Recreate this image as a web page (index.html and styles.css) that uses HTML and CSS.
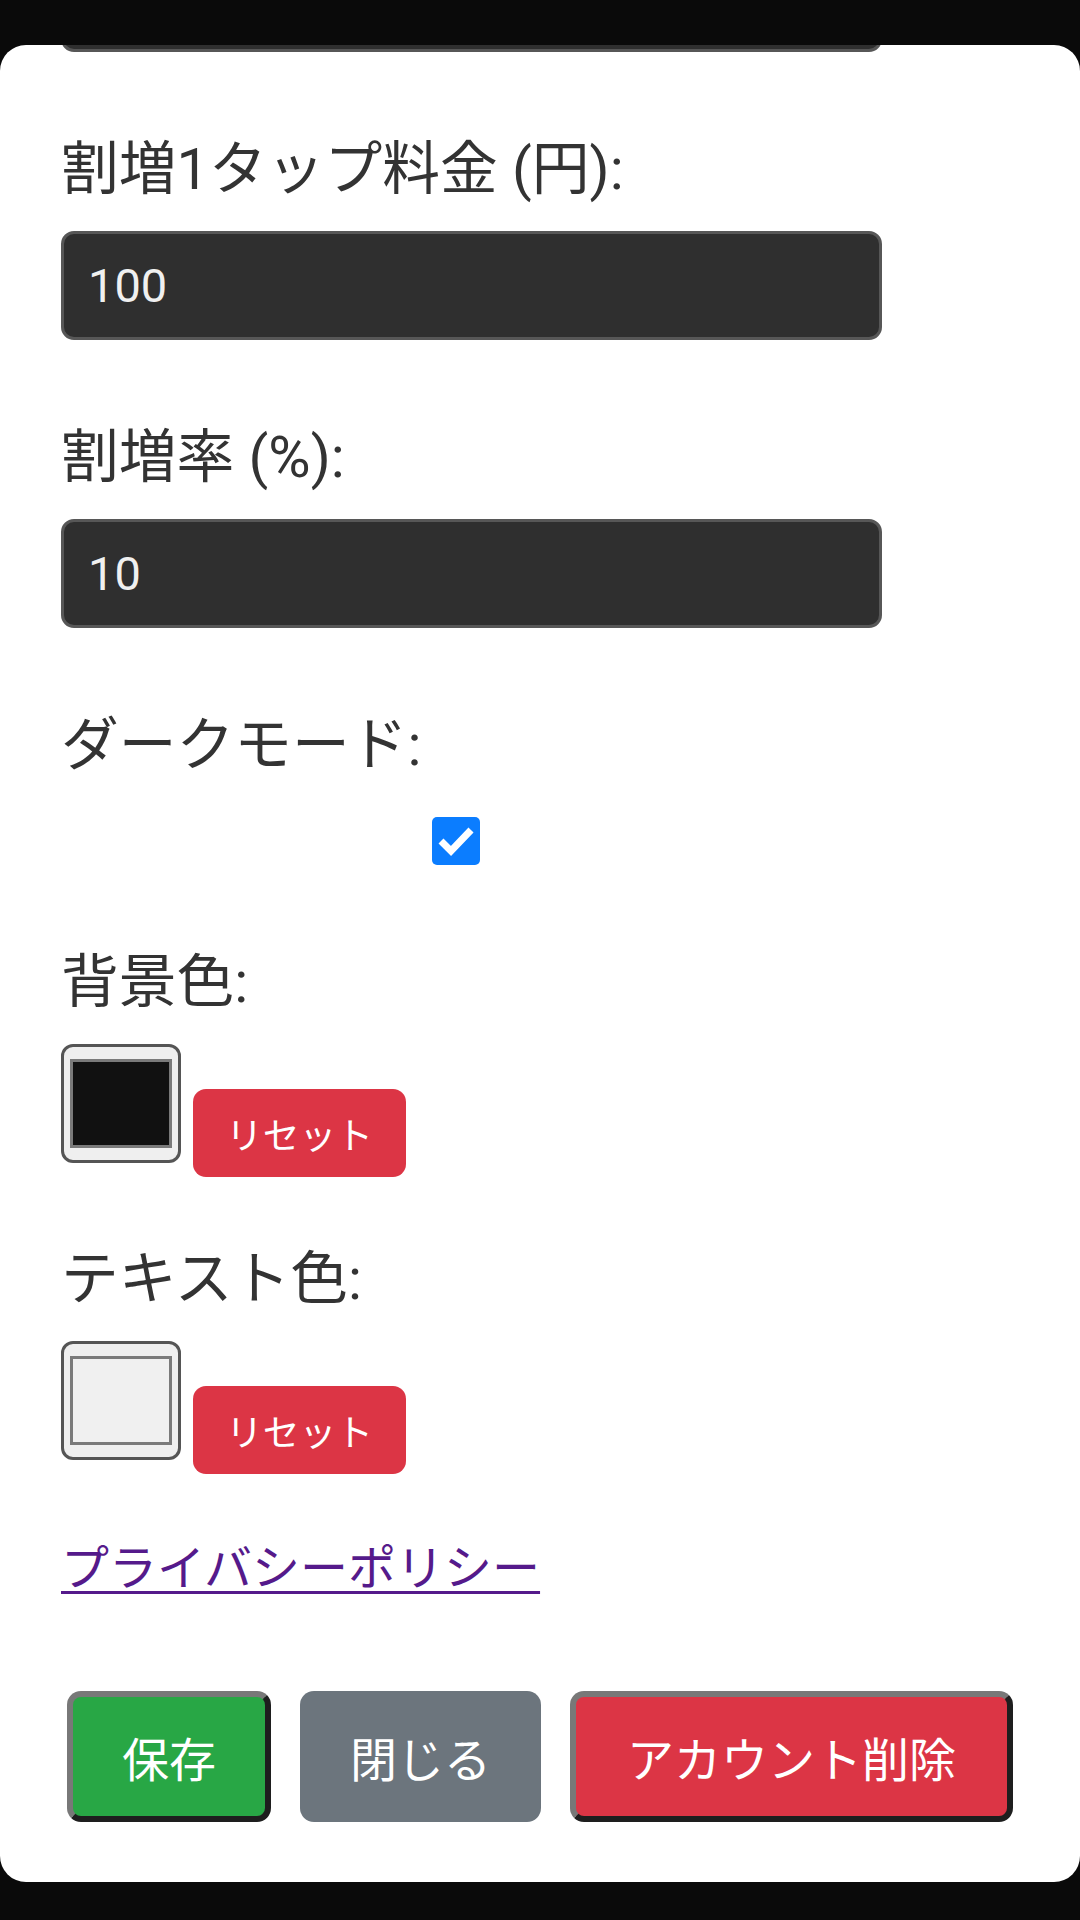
FILE: index.html
```html
<!DOCTYPE html>
<html lang="ja">
<head>
<meta charset="utf-8">
<title>設定</title>
<link rel="stylesheet" href="styles.css">
</head>
<body>
<div class="page">
  <div class="modal">
    <div class="field field-prev">
      <input class="text-input" type="text" value="">
    </div>
    <div class="field">
      <label class="label">割増1タップ料金 (円):</label>
      <input class="text-input" type="text" value="100">
    </div>
    <div class="field">
      <label class="label">割増率 (%):</label>
      <input class="text-input" type="text" value="10">
    </div>
    <div class="field">
      <label class="label">ダークモード:</label>
      <span class="checkbox">
        <svg viewBox="0 0 48 48" width="48" height="48"><polyline points="9,24 19,34 39,13" fill="none" stroke="#fff" stroke-width="7"/></svg>
      </span>
    </div>
    <div class="field field-color">
      <label class="label">背景色:</label>
      <div class="color-row">
        <span class="swatch"><span class="swatch-fill dark"></span></span>
        <button class="reset-btn">リセット</button>
      </div>
    </div>
    <div class="field field-color">
      <label class="label">テキスト色:</label>
      <div class="color-row">
        <span class="swatch"><span class="swatch-fill light"></span></span>
        <button class="reset-btn">リセット</button>
      </div>
    </div>
    <p class="link-row"><a class="policy-link" href="#">プライバシーポリシー</a></p>
    <div class="actions">
      <button class="btn btn-save">保存</button>
      <button class="btn btn-close">閉じる</button>
      <button class="btn btn-delete">アカウント削除</button>
    </div>
  </div>
</div>
</body>
</html>
```
FILE: styles.css
```css
html, body {
  margin: 0;
  padding: 0;
  background: #0a0a0a;
}
body {
  width: 1080px;
  height: 1920px;
  overflow: hidden;
  font-family: Roboto, "Noto Sans CJK JP", sans-serif;
  color: #333;
}
.page {
  padding-top: 45px;
}
.modal {
  box-sizing: border-box;
  height: 1837px;
  background: #fff;
  border-radius: 26px;
  overflow: hidden;
  padding: 0 61px;
}
.field {
  margin-bottom: 75px;
}
.field-prev {
  margin-top: -102px;
}
.label {
  display: block;
  font-size: 57.75px;
  line-height: 84px;
  height: 84px;
  margin-bottom: 20px;
  color: #333;
  white-space: nowrap;
}
.text-input {
  display: block;
  box-sizing: border-box;
  width: 821px;
  height: 109px;
  margin: 0;
  padding: 0 24px;
  border: 3px solid #575757;
  border-radius: 13px;
  background: #2f2f2f;
  color: #f0f0f0;
  font-family: Roboto, "Noto Sans CJK JP", sans-serif;
  font-size: 47px;
  outline: none;
}
.checkbox {
  display: block;
  width: 48px;
  height: 48px;
  margin: 30px 0 0 371px;
  background: #0b7dff;
  border-radius: 5px;
}
.checkbox svg {
  display: block;
}
.field-color {
  margin-bottom: 60px;
}
.color-row {
  display: flex;
  align-items: flex-start;
  gap: 12px;
}
.swatch {
  box-sizing: border-box;
  display: block;
  width: 120px;
  height: 119px;
  padding: 12px 6px;
  border: 3px solid #555;
  border-radius: 12px;
  background: #efefef;
}
.swatch-fill {
  box-sizing: border-box;
  display: block;
  width: 100%;
  height: 100%;
  border: 3px solid #7a7a7a;
}
.swatch-fill.dark {
  background: #111;
}
.swatch-fill.light {
  background: #f0f0f0;
}
.reset-btn {
  margin-top: 45px;
  width: 213px;
  height: 88px;
  padding: 0;
  border: none;
  border-radius: 13px;
  background: #dc3545;
  color: #fff;
  font-family: Roboto, "Noto Sans CJK JP", sans-serif;
  font-size: 36.75px;
}
.link-row {
  margin: 0;
  font-size: 48px;
  line-height: 70px;
}
.policy-link {
  color: #551a8b;
  text-decoration: underline;
  text-underline-offset: 6px;
  text-decoration-thickness: 3px;
}
.actions {
  display: flex;
  gap: 29px;
  margin-top: 87px;
  margin-left: 6px;
}
.btn {
  box-sizing: border-box;
  height: 131px;
  padding: 0 49px;
  border-radius: 14px;
  color: #fff;
  font-family: Roboto, "Noto Sans CJK JP", sans-serif;
  font-size: 47px;
  border: 6px solid;
  border-color: #787878 #1e1e1e #1e1e1e #787878;
}
.btn-save {
  background: #28a745;
}
.btn-close {
  background: #6c757d;
  border: none;
  padding: 0 50px;
}
.btn-delete {
  background: #dc3545;
  padding: 0 51px;
}
```
